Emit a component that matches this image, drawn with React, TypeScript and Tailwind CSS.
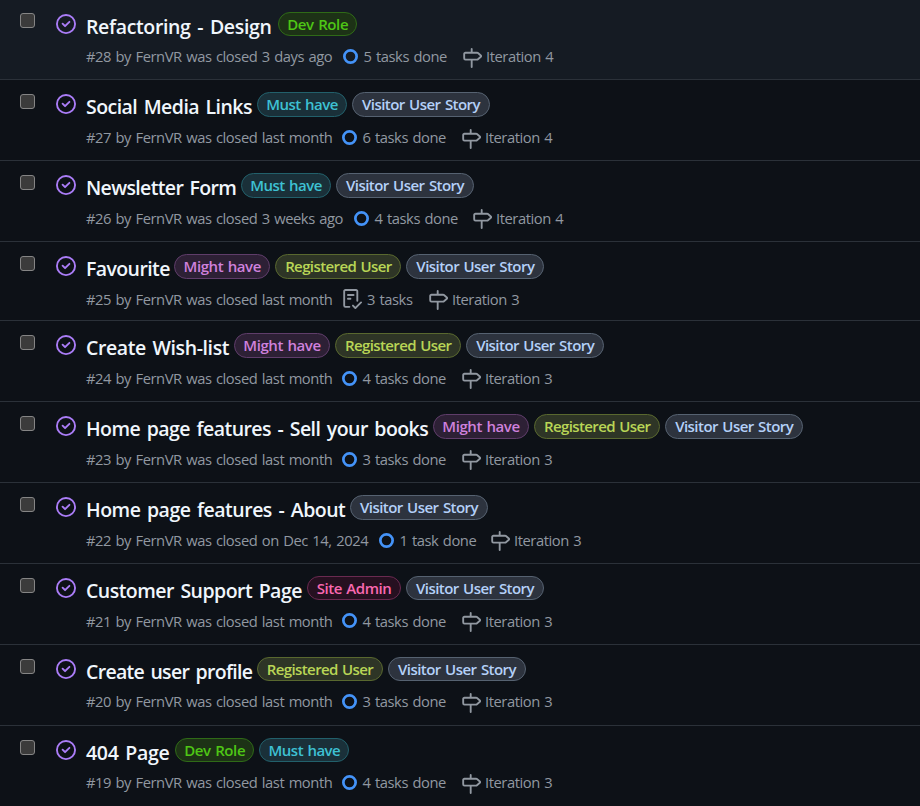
type LabelName = "dev" | "must" | "might" | "registered" | "visitor" | "admin";

type Issue = {
  title: string;
  titleWidth: number;
  tracking: string;
  labels: LabelName[];
  meta: string;
  metaWidth: number;
  tasks: string;
  tasksWidth: number;
  checklist?: boolean;
  iteration: string;
  row: string;
  box: string;
  label: string;
  metaTop: string;
  iconTop: string;
  signTop: string;
};

const labelStyles: Record<LabelName, { text: string; className: string }> = {
  dev: { text: "Dev Role", className: "w-[79.4px] bg-[#1d3216] border-[#2f6a17] text-[#4ec615] tracking-[-0.4px]" },
  must: { text: "Must have", className: "w-[90px] bg-[#1a3039] border-[#22606b] text-[#3ec1d3] tracking-[-0.52px]" },
  might: { text: "Might have", className: "w-[96.4px] bg-[#2d2035] border-[#5f3d6a] text-[#cf81dc] tracking-[-0.42px]" },
  registered: { text: "Registered User", className: "w-[126px] bg-[#2e3526] border-[#59682f] text-[#b9d556] tracking-[-0.6px]" },
  visitor: { text: "Visitor User Story", className: "w-[138px] bg-[#2d333e] border-[#566271] text-[#b4d0f8] tracking-[-0.54px]" },
  admin: { text: "Site Admin", className: "w-[94px] bg-[#261020] border-[#6a2a50] text-[#f968b0] tracking-[-0.45px]" },
};

const common = {
  row: "h-[81px] border-b",
  box: "mt-[14px]",
  label: "h-[25px]",
  metaTop: "mt-[46px]",
  iconTop: "mt-[50px]",
  signTop: "mt-[48px]",
};

const issues: Issue[] = [
  { ...common, title: "Refactoring - Design", titleWidth: 192, tracking: "tracking-[-0.35px]", labels: ["dev"], meta: "#28 by FernVR was closed 3 days ago", metaWidth: 257, tasks: "5 tasks done", tasksWidth: 98.5, iteration: "Iteration 4", row: "h-20 border-b bg-[#151b23]", box: "mt-[13px]", label: "h-6", metaTop: "mt-[45px]", iconTop: "mt-[49px]" },
  { ...common, title: "Social Media Links", titleWidth: 171, tracking: "tracking-[-0.55px]", labels: ["must", "visitor"], meta: "#27 by FernVR was closed last month", metaWidth: 256, tasks: "6 tasks done", tasksWidth: 98.5, iteration: "Iteration 4", signTop: "mt-[49px]" },
  { ...common, title: "Newsletter Form", titleWidth: 155, tracking: "tracking-[-0.65px]", labels: ["must", "visitor"], meta: "#26 by FernVR was closed 3 weeks ago", metaWidth: 268, tasks: "4 tasks done", tasksWidth: 97.5, iteration: "Iteration 4" },
  { ...common, title: "Favourite", titleWidth: 88, tracking: "tracking-[-0.6px]", labels: ["might", "registered", "visitor"], meta: "#25 by FernVR was closed last month", metaWidth: 256, tasks: "3 tasks", tasksWidth: 61, checklist: true, iteration: "Iteration 3", row: "h-[79px] border-b" },
  { ...common, title: "Create Wish-list", titleWidth: 147.8, tracking: "tracking-[-0.4px]", labels: ["might", "registered", "visitor"], meta: "#24 by FernVR was closed last month", metaWidth: 256, tasks: "4 tasks done", tasksWidth: 98.5, iteration: "Iteration 3" },
  { ...common, title: "Home page features - Sell your books", titleWidth: 346.8, tracking: "tracking-[-0.55px]", labels: ["might", "registered", "visitor"], meta: "#23 by FernVR was closed last month", metaWidth: 256, tasks: "3 tasks done", tasksWidth: 98.5, iteration: "Iteration 3" },
  { ...common, title: "Home page features - About", titleWidth: 264, tracking: "tracking-[-0.5px]", labels: ["visitor"], meta: "#22 by FernVR was closed on Dec 14, 2024", metaWidth: 293, tasks: "1 task done", tasksWidth: 90.5, iteration: "Iteration 3" },
  { ...common, title: "Customer Support Page", titleWidth: 221, tracking: "tracking-[-0.53px]", labels: ["admin", "visitor"], meta: "#21 by FernVR was closed last month", metaWidth: 256, tasks: "4 tasks done", tasksWidth: 98.5, iteration: "Iteration 3", label: "h-6", iconTop: "mt-[49px]" },
  { ...common, title: "Create user profile", titleWidth: 171, tracking: "tracking-[-0.7px]", labels: ["registered", "visitor"], meta: "#20 by FernVR was closed last month", metaWidth: 256, tasks: "3 tasks done", tasksWidth: 98.5, iteration: "Iteration 3", label: "h-6", metaTop: "mt-[45px]", iconTop: "mt-[49px]" },
  { ...common, title: "404 Page", titleWidth: 89, tracking: "tracking-[-0.3px]", labels: ["dev", "must"], meta: "#19 by FernVR was closed last month", metaWidth: 256, tasks: "4 tasks done", tasksWidth: 98.5, iteration: "Iteration 3", row: "h-20", label: "h-6", metaTop: "mt-[45px]", iconTop: "mt-[49px]" },
];

function ClosedIcon() {
  return (
    <svg viewBox="0 0 16 16" className="size-5 fill-[#ab7df8]">
      <path d="M11.28 6.78a.75.75 0 0 0-1.06-1.06L7.25 8.69 5.78 7.22a.75.75 0 0 0-1.06 1.06l2 2a.75.75 0 0 0 1.06 0l3.5-3.5Z" />
      <path d="M16 8A8 8 0 1 1 0 8a8 8 0 0 1 16 0Zm-1.5 0a6.5 6.5 0 1 0-13 0 6.5 6.5 0 0 0 13 0Z" />
    </svg>
  );
}

function MilestoneIcon() {
  return (
    <svg viewBox="0 0 16 16" className="size-5 fill-[#9198a1]">
      <path d="M7.75 0a.75.75 0 0 1 .75.75V3h3.634c.414 0 .814.147 1.13.414l2.07 1.75a1.75 1.75 0 0 1 0 2.672l-2.07 1.75a1.75 1.75 0 0 1-1.13.414H8.5v5.25a.75.75 0 0 1-1.5 0V10H2.75A1.75 1.75 0 0 1 1 8.25v-3.5C1 3.784 1.784 3 2.75 3H7V.75A.75.75 0 0 1 7.75 0Zm4.384 8.5a.25.25 0 0 0 .161-.06l2.07-1.75a.248.248 0 0 0 0-.38l-2.07-1.75a.25.25 0 0 0-.161-.06H2.75a.25.25 0 0 0-.25.25v3.5c0 .138.112.25.25.25h9.384Z" />
    </svg>
  );
}

function ChecklistIcon() {
  return (
    <svg viewBox="0 0 16 16" className="size-5 fill-[#9198a1]">
      <path d="M2.5 1.75v11.5c0 .138.112.25.25.25h3.17a.75.75 0 0 1 0 1.5H2.75A1.75 1.75 0 0 1 1 13.25V1.75C1 .784 1.784 0 2.75 0h8.5C12.216 0 13 .784 13 1.75v7.736a.75.75 0 0 1-1.5 0V1.75a.25.25 0 0 0-.25-.25h-8.5a.25.25 0 0 0-.25.25Zm13.274 9.537v-.001l-4.557 4.45a.75.75 0 0 1-1.055-.008l-1.943-1.95a.75.75 0 0 1 1.062-1.058l1.419 1.425 4.026-3.932a.75.75 0 1 1 1.048 1.074ZM4.75 4h4.5a.75.75 0 0 1 0 1.5h-4.5a.75.75 0 0 1 0-1.5ZM4 7.75A.75.75 0 0 1 4.75 7h2a.75.75 0 0 1 0 1.5h-2A.75.75 0 0 1 4 7.75Z" />
    </svg>
  );
}

function ProgressRing() {
  return (
    <svg viewBox="0 0 15 15" className="size-[15px]">
      <circle cx="7.5" cy="7.5" r="6.15" fill="none" stroke="#4493f8" strokeWidth="2.7" />
    </svg>
  );
}

function IssueRow({ issue }: { issue: Issue }) {
  return (
    <li className={`flex items-start overflow-hidden border-[#2b3139] pl-5 ${issue.row}`}>
      <span className={`size-[15px] shrink-0 rounded-[3px] border border-[#858585] bg-[#3b3b3b] ${issue.box}`} />
      <span className="mt-3.5 ml-[21px] shrink-0">
        <ClosedIcon />
      </span>
      <div className="ml-2.5 grid whitespace-nowrap">
        <div className="col-start-1 row-start-1 flex items-start pt-3">
          <h3
            className={`mt-[1px] shrink-0 text-[19.5px] leading-[28px] font-semibold [word-spacing:2px] text-[#f0f6fc] ${issue.tracking}`}
            style={{ width: issue.titleWidth }}
          >
            {issue.title}
          </h3>
          <div className="flex gap-[5px]">
            {issue.labels.map((name) => (
              <span
                key={name}
                className={`flex justify-center rounded-full border text-[15px] leading-[23px] font-semibold [word-spacing:1px] ${issue.label} ${labelStyles[name].className}`}
              >
                {labelStyles[name].text}
              </span>
            ))}
          </div>
        </div>
        <div className="col-start-1 row-start-1 flex items-start text-[14.75px] leading-[22px] tracking-[-0.43px] [word-spacing:1px] text-[#9198a1]">
          <span className={`shrink-0 ${issue.metaTop}`} style={{ width: issue.metaWidth }}>
            {issue.meta}
          </span>
          {issue.checklist ? (
            <span className="mt-[47px] mr-[5px]">
              <ChecklistIcon />
            </span>
          ) : (
            <span className={`mr-[5.5px] ${issue.iconTop}`}>
              <ProgressRing />
            </span>
          )}
          <span className={`shrink-0 ${issue.metaTop}`} style={{ width: issue.tasksWidth }}>
            {issue.tasks}
          </span>
          <span className={`mr-1 ${issue.signTop}`}>
            <MilestoneIcon />
          </span>
          <span className={issue.metaTop}>{issue.iteration}</span>
        </div>
      </div>
    </li>
  );
}

export default function App() {
  return (
    <ul className="h-[806px] w-[920px] overflow-hidden bg-[#0d1117] font-['Open_Sans','Noto_Sans',sans-serif]">
      {issues.map((issue) => (
        <IssueRow key={issue.title} issue={issue} />
      ))}
    </ul>
  );
}
